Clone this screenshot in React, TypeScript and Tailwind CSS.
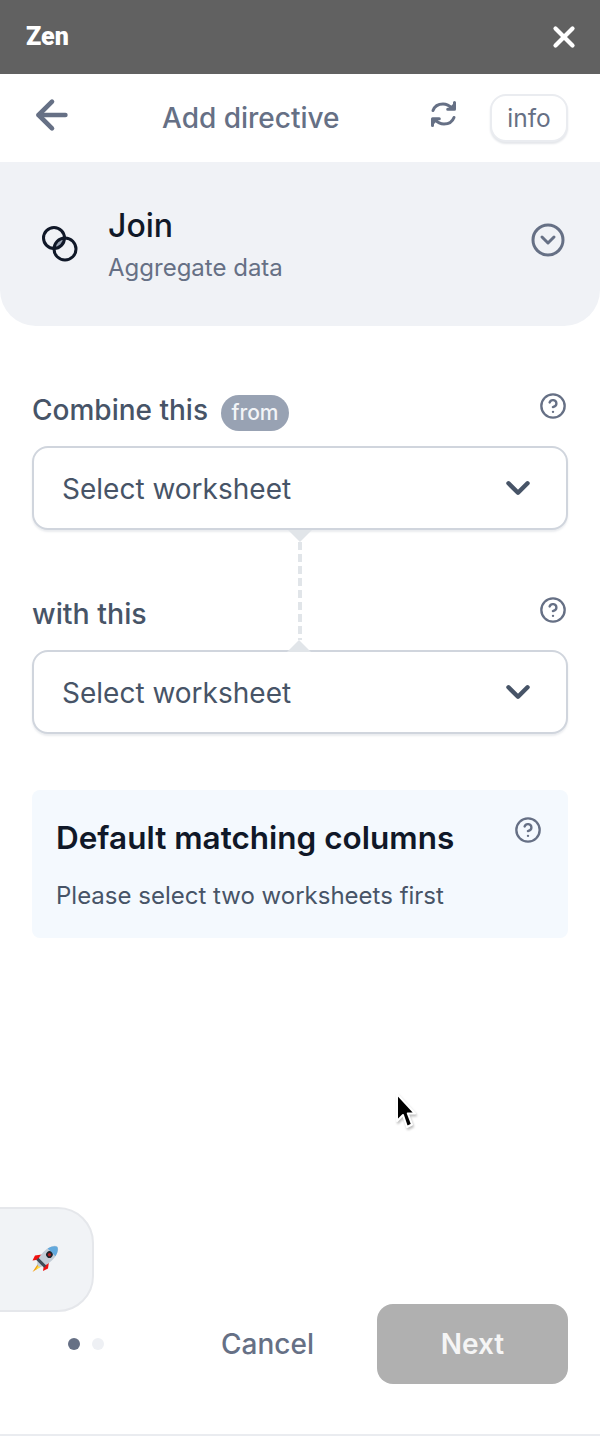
import React from 'react';
import { ArrowLeft, ChevronDown, CircleChevronDown, CircleHelp, X } from 'lucide-react';

const RefreshIcon = () => (
  <svg width="30" height="30" viewBox="0 0 30 30" fill="none" stroke="#667085" strokeWidth="3" strokeLinecap="round" strokeLinejoin="round">
    <path d="M4 11.5C5.5 7.500 9.500 5 14 5c3.500 0 6.500 1.600 9 4.500" />
    <path d="M25.500 3.500v6.800h-6.800" fill="#667085" />
    <path d="M25 18.500C23.500 22.500 19.500 25 15 25c-3.500 0-6.500-1.600-9-4.500" />
    <path d="M3.500 26.500v-6.800h6.800" fill="#667085" />
  </svg>
);

const JoinIcon = () => (
  <svg width="40" height="40" viewBox="0 0 40 40" fill="none">
    <path d="M24.700 14.300A10.500 10.500 0 0 1 14.300 24.700A11 11 0 0 1 24.700 14.300z" fill="#98a2b3" />
    <circle cx="14" cy="14" r="10.500" stroke="#101828" strokeWidth="3" />
    <circle cx="25" cy="25" r="11" stroke="#101828" strokeWidth="3" />
  </svg>
);

const RocketIcon = () => (
  <svg width="30" height="30" viewBox="0 0 30 30">
    <path d="M7.500 20 1.500 29l9-6z" fill="#f59e0b" />
    <path d="M7.500 22 4.500 27l5-3z" fill="#fde047" />
    <path d="M11 11.500 4 12.500 1.500 17.500l7-1z" fill="#ef1010" />
    <path d="M18 18.500l-1 7-5 2.500 1-7z" fill="#ef1010" />
    <g transform="rotate(45 17 13)">
      <ellipse cx="17" cy="13.500" rx="6" ry="13.500" fill="#c3ccd6" />
      <path d="M11.500 8C12.500 3.500 15 .500 17 0c2 .5 4.500 3.500 5.500 8z" fill="#62a9dd" />
      <circle cx="17" cy="11" r="3.300" fill="#20242c" />
      <circle cx="17" cy="11" r="1.600" fill="#b91c1c" />
      <rect x="11.500" y="21" width="11" height="3" fill="#3f4a57" />
    </g>
  </svg>
);

const CursorIcon = () => (
  <svg width="24" height="40" viewBox="0 0 24 40">
    <path d="M2 2v27l6-6 4 12 5-2.500-4.200-11H20z" fill="#000" stroke="#fff" strokeWidth="2" strokeLinejoin="round" style={{ filter: 'drop-shadow(1px 2px 1px rgba(0,0,0,0.25))' }} />
  </svg>
);

const FieldSelect = () => (
  <div className="h-[84px] flex items-center justify-between pl-[28px] pr-[29px] bg-white border-2 border-[#d0d5dd] rounded-[16px] shadow-[0_2px_2px_rgba(229,231,235,0.8)]">
    <span className="pt-[1px] text-[28px] text-[#475467]">Select worksheet</span>
    <ChevronDown size={38} strokeWidth={2.8} color="#475467" />
  </div>
);

export default function App() {
  return (
    <div className="relative h-[1436px] w-[600px] flex flex-col bg-white overflow-hidden font-['Inter',sans-serif]">
      <div className="h-[74px] shrink-0 flex items-center justify-between pl-[26px] pr-[19px] bg-[#616161]">
        <span className="font-['Roboto',sans-serif] text-[25px] font-black text-white">Zen</span>
        <X size={34} strokeWidth={3} color="#ffffff" />
      </div>

      <div className="h-[88px] shrink-0 flex items-center pl-[29px] pr-[32px]">
        <ArrowLeft size={46} strokeWidth={2.4} color="#667085" className="-mt-[6px]" />
        <span className="ml-[87px] text-[28px] font-medium text-[#667085] whitespace-nowrap">Add directive</span>
        <div className="ml-auto mr-[31px] -mt-[8px]">
          <RefreshIcon />
        </div>
        <button className="w-[78px] h-[48px] rounded-[16px] bg-white border-2 border-[#eaecf0] shadow-[0_2px_2px_#e5e7eb] text-[24.5px] text-[#667085]">
          info
        </button>
      </div>

      <div className="h-[164px] shrink-0 flex items-center pl-[40px] pr-[34px] bg-[#f0f2f6] rounded-b-[36px]">
        <JoinIcon />
        <div className="ml-[28px] mt-[2px] flex flex-col">
          <span className="text-[32px] leading-[40px] font-medium text-[#101828]">Join</span>
          <span className="mt-[6px] text-[24px] leading-[32px] text-[#667085]">Aggregate data</span>
        </div>
        <CircleChevronDown size={36} strokeWidth={2} color="#667085" className="ml-auto -mt-[8px]" />
      </div>

      <div className="relative mt-[66px] px-[32px]">
        <div className="h-[54px] flex items-start justify-between">
          <div className="flex items-start gap-[13px]">
            <span className="text-[28px] leading-[36px] font-medium text-[#475467]">Combine this</span>
            <span className="mt-[3px] h-[36px] w-[68px] flex items-center justify-center rounded-full bg-[#98a2b3] text-[21px] font-medium text-[#f2f4f7]">
              from
            </span>
          </div>
          <CircleHelp size={28} strokeWidth={2} color="#667085" className="mr-[1px]" />
        </div>
        <FieldSelect />

        <div className="h-[120px] pt-[66px] flex items-start justify-between">
          <span className="text-[28.500px] leading-[36px] font-medium text-[#475467]">with this</span>
          <CircleHelp size={28} strokeWidth={2} color="#667085" className="mr-[1px]" />
        </div>
        <FieldSelect />

        <div className="absolute left-[288px] top-[138px] flex flex-col items-center w-[24px]">
          <div className="w-0 h-0 border-l-[12px] border-r-[12px] border-t-[12px] border-l-transparent border-r-transparent border-t-[#e1e5e9]" />
          <div className="h-[98px] w-[4px] bg-[repeating-linear-gradient(to_bottom,#e1e5e9_0,#e1e5e9_8px,transparent_8px,transparent_12px)]" />
          <div className="w-0 h-0 border-l-[12px] border-r-[12px] border-b-[12px] border-l-transparent border-r-transparent border-b-[#e1e5e9] -ml-[3px]" />
        </div>

        <div className="relative mt-[56px] h-[148px] pl-[24px] pt-[29px] bg-[#f4f9fe] rounded-[8px]">
          <div className="text-[31.500px] leading-[38px] font-semibold text-[#101828] whitespace-nowrap">Default matching columns</div>
          <div className="mt-[23px] text-[24px] leading-[32px] text-[#475467]">Please select two worksheets first</div>
          <CircleHelp size={28} strokeWidth={2} color="#667085" className="absolute right-[26px] top-[26px]" />
        </div>
      </div>

      <div className="mt-auto h-[132px] shrink-0 flex items-start pl-[68px] pr-[32px] border-b-2 border-[#eaecf0]">
        <div className="mt-[34px] flex items-center gap-[12px]">
          <span className="w-[12px] h-[12px] rounded-full bg-[#667085]" />
          <span className="w-[12px] h-[12px] rounded-full bg-[#eef0f4]" />
        </div>
        <span className="ml-[117px] mt-[22px] text-[28px] leading-[36px] font-medium text-[#667085]">Cancel</span>
        <button className="ml-auto w-[191px] h-[80px] rounded-[16px] bg-[#b0b0b0] text-[28px] font-semibold text-[#f5f5f5]">
          Next
        </button>
      </div>

      <div className="absolute left-[-40px] top-[1207px] w-[134px] h-[105px] flex items-center justify-end pr-[31px] pb-[4px] bg-[#f1f3f6] border-2 border-[#e5e7eb] rounded-[36px]">
        <RocketIcon />
      </div>

      <div className="absolute left-[395px] top-[1092px]">
        <CursorIcon />
      </div>
    </div>
  );
}
